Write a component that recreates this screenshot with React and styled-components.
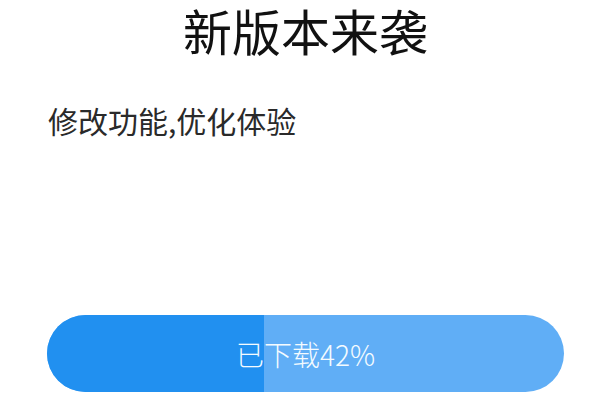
import React from "react";
import styled, { createGlobalStyle } from "styled-components";

const Global = createGlobalStyle`
  html, body { margin: 0; padding: 0; background: #fff; }
  body { font-family: "Noto Sans CJK SC", "Noto Sans", sans-serif; }
`;

const Dialog = styled.div`
  width: 600px;
  height: 400px;
  box-sizing: border-box;
  padding: 4px 36px 8px 47px;
  display: flex;
  flex-direction: column;
  background: #fff;
  overflow: hidden;
`;

const Title = styled.h1`
  margin: 0;
  font-size: 49px;
  font-weight: 400;
  line-height: 52px;
  color: #111;
  text-align: center;
`;

const Message = styled.p`
  margin: 47px 0 0 1px;
  font-size: 30px;
  line-height: 34px;
  color: #2a2a2a;
`;

const Progress = styled.div`
  margin-top: auto;
  position: relative;
  height: 77px;
  border-radius: 39px;
  background: #60aef6;
  overflow: hidden;
  display: flex;
  align-items: center;
  justify-content: center;
`;

const Fill = styled.div`
  position: absolute;
  left: 0;
  top: 0;
  bottom: 0;
  background: #2190f0;
`;

const Label = styled.span`
  position: relative;
  font-size: 28px;
  font-weight: 300;
  color: #f4fbff;
`;

export default function App() {
  const percent = 42;
  return (
    <>
      <Global />
      <Dialog>
        <Title>新版本来袭</Title>
        <Message>修改功能,优化体验</Message>
        <Progress>
          <Fill style={{ width: `${percent}%` }} />
          <Label>已下载{percent}%</Label>
        </Progress>
      </Dialog>
    </>
  );
}
